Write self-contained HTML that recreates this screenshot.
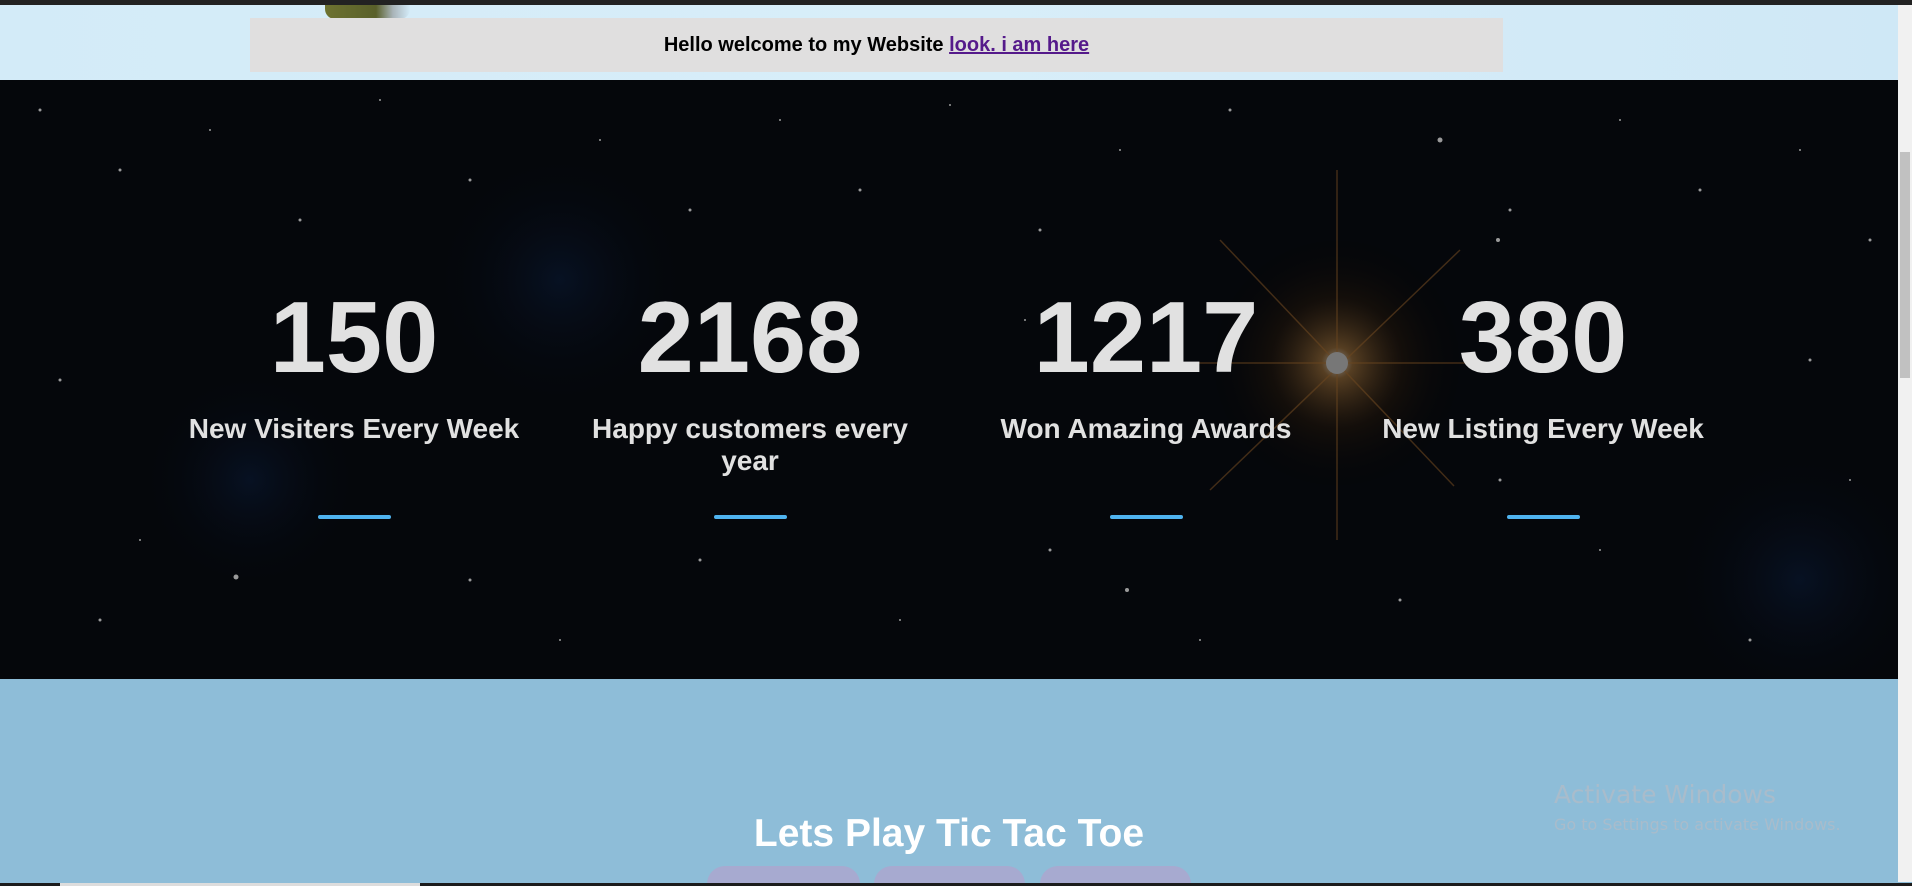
<!DOCTYPE html>
<html style="overflow:hidden"><head><meta charset="utf-8"><style>
*{margin:0;padding:0;box-sizing:border-box}
html,body{width:1912px;height:886px;overflow:hidden}
body{font-family:"Liberation Sans",Arial,sans-serif;background:#8ebdd8;position:relative}
.topbar{position:absolute;left:0;top:0;width:1912px;height:5px;background:#222}
.head{position:absolute;left:0;top:5px;width:1898px;height:75px;background:linear-gradient(90deg,#d3ebf8,#d8eef9,#cfe8f6)}
.bottle{position:absolute;left:325px;top:5px;width:85px;height:14px;background:linear-gradient(90deg,#6d7230,#59602a 60%,#a9b4b9 80%,#d3ebf8);border-radius:0 0 10px 10px}
.box{position:absolute;left:250px;top:18px;width:1253px;height:54px;background:#e0dfdf;text-align:center;font-weight:bold;font-size:20px;line-height:54px;color:#000}
.box a{color:#551a8b;text-decoration:underline}
.dark{position:absolute;left:0;top:80px;width:1898px;height:599px;background:#05070b;overflow:hidden}
.col{position:absolute;top:0;width:396px;text-align:center;color:#e1e1e1}
.num{position:absolute;top:208px;width:100%;font-size:101px;font-weight:bold;line-height:1}
.lab{position:absolute;top:333px;left:18px;width:360px;font-size:28px;font-weight:bold;line-height:32px}
.bar{position:absolute;top:435px;left:162px;width:73px;height:4px;background:#4fb3ef;border-radius:2px}
.sb{position:absolute;left:1898px;top:5px;width:14px;height:877px;background:#f1f1f1}
.thumb{position:absolute;left:1900px;top:152px;width:10px;height:226px;background:#c1c1c1}
.title{position:absolute;left:0;width:1898px;top:812px;text-align:center;color:#fff;font-weight:bold;font-size:39px}
.pill{position:absolute;top:866px;height:18px;background:#a7aad0;border-radius:40px 40px 0 0}
.aw{position:absolute;left:1554px;top:780px;color:#a9bccb;font-size:25px;font-family:"DejaVu Sans",sans-serif}
.aw2{position:absolute;left:1554px;top:815px;color:#a9bccb;font-size:16px;font-family:"DejaVu Sans",sans-serif}
.task{position:absolute;left:0;top:883px;width:1912px;height:3px;background:#1c1c1c}
.task i{position:absolute;left:60px;top:0;width:360px;height:3px;background:#ddd}
</style></head><body>
<div class="topbar"></div>
<div class="head"></div>
<div class="bottle"></div>
<div class="box">Hello welcome to my Website <a>look. i am here</a></div>
<div class="dark">
<svg width="1898" height="599" style="position:absolute;left:0;top:0">
<defs><radialGradient id="g"><stop offset="0" stop-color="#8a8a8a"/><stop offset=".12" stop-color="#6a4c28" stop-opacity=".8"/><stop offset=".5" stop-color="#2a1a0a" stop-opacity=".4"/><stop offset="1" stop-color="#000" stop-opacity="0"/></radialGradient>
<radialGradient id="b"><stop offset="0" stop-color="#0d2a5a" stop-opacity=".3"/><stop offset="1" stop-color="#000" stop-opacity="0"/></radialGradient></defs>
<circle cx="560" cy="200" r="140" fill="url(#b)"/><circle cx="1800" cy="500" r="140" fill="url(#b)"/><circle cx="250" cy="400" r="120" fill="url(#b)"/>
<circle cx="1337" cy="283" r="130" fill="url(#g)"/>
<g stroke="#6a4620" stroke-opacity=".6" stroke-width="1.5">
<line x1="1337" y1="90" x2="1337" y2="460"/><line x1="1180" y1="283" x2="1500" y2="283"/>
<line x1="1220" y1="160" x2="1454" y2="406"/><line x1="1460" y1="170" x2="1210" y2="410"/></g>
<circle cx="1337" cy="283" r="11" fill="#777"/>
<g fill="#9a9a9a">
<circle cx="40" cy="30" r="1.5"/><circle cx="120" cy="90" r="1.5"/><circle cx="210" cy="50" r="1"/><circle cx="300" cy="140" r="1.5"/><circle cx="380" cy="20" r="1"/><circle cx="470" cy="100" r="1.5"/><circle cx="600" cy="60" r="1"/><circle cx="690" cy="130" r="1.5"/><circle cx="780" cy="40" r="1"/><circle cx="860" cy="110" r="1.5"/><circle cx="950" cy="25" r="1"/><circle cx="1040" cy="150" r="1.5"/><circle cx="1120" cy="70" r="1"/><circle cx="1230" cy="30" r="1.5"/><circle cx="1440" cy="60" r="2.5"/><circle cx="1510" cy="130" r="1.5"/><circle cx="1620" cy="40" r="1"/><circle cx="1700" cy="110" r="1.5"/><circle cx="1800" cy="70" r="1"/><circle cx="1870" cy="160" r="1.5"/>
<circle cx="60" cy="300" r="1.5"/><circle cx="140" cy="460" r="1"/><circle cx="100" cy="540" r="1.5"/><circle cx="470" cy="500" r="1.5"/><circle cx="560" cy="560" r="1"/><circle cx="700" cy="480" r="1.5"/><circle cx="900" cy="540" r="1"/><circle cx="1050" cy="470" r="1.5"/><circle cx="1200" cy="560" r="1"/><circle cx="1400" cy="520" r="1.5"/><circle cx="1600" cy="470" r="1"/><circle cx="1750" cy="560" r="1.5"/><circle cx="1850" cy="400" r="1"/><circle cx="1810" cy="280" r="1.5"/><circle cx="1025" cy="240" r="1"/><circle cx="1500" cy="400" r="1.5"/><circle cx="236" cy="497" r="2.5"/><circle cx="1127" cy="510" r="2"/><circle cx="1498" cy="160" r="2"/>
</g></svg>
<div class="col" style="left:156px"><div class="num">150</div><div class="lab">New Visiters Every Week</div><div class="bar"></div></div>
<div class="col" style="left:552px"><div class="num">2168</div><div class="lab">Happy customers every year</div><div class="bar"></div></div>
<div class="col" style="left:948px"><div class="num">1217</div><div class="lab">Won Amazing Awards</div><div class="bar"></div></div>
<div class="col" style="left:1345px"><div class="num">380</div><div class="lab">New Listing Every Week</div><div class="bar"></div></div>
</div>
<div class="title">Lets Play Tic Tac Toe</div>
<div class="pill" style="left:707px;width:153px"></div>
<div class="pill" style="left:874px;width:151px"></div>
<div class="pill" style="left:1040px;width:151px"></div>
<div class="aw">Activate Windows</div>
<div class="aw2">Go to Settings to activate Windows.</div>
<div class="sb"></div><div class="thumb"></div>
<div class="task"><i></i></div>
</body></html>
